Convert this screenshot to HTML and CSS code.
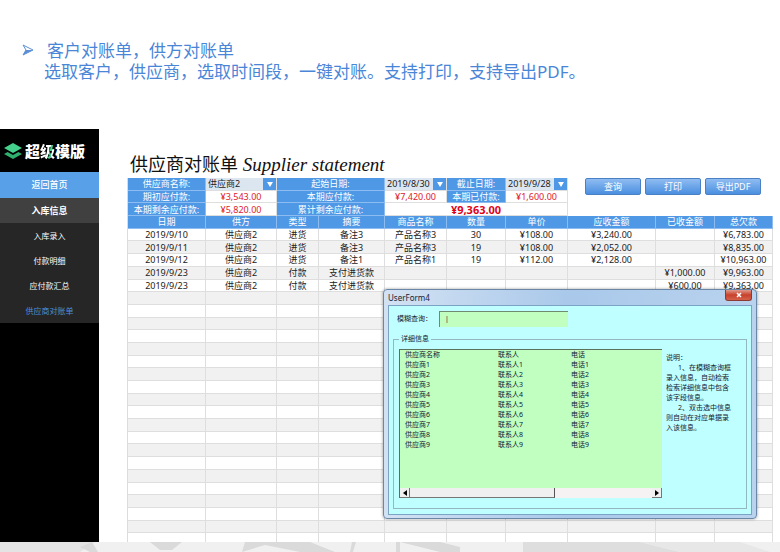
FILE: index.html
```html
<!DOCTYPE html>
<html lang="zh-CN">
  <head>
    <meta charset="UTF-8" />
    <meta name="viewport" content="width=device-width, initial-scale=1.0" />
    <title>供应商对账单</title>
    <link rel="stylesheet" href="styles.css">
  </head>
  <body>
    <header class="intro">
      <svg class="intro-arrow" viewBox="0 0 12 12" aria-hidden="true">
        <path d="M1 1 L11 6 L1 11 L4 6 Z" fill="#fff" stroke="#5b8fd8" stroke-width="1" />
        <path d="M1 11 L11 6 L4 6 Z" fill="#5b8fd8" />
      </svg>
      <div class="intro-text">
        <p class="first">客户对账单，供方对账单</p>
        <p>选取客户，供应商，选取时间段，一键对账。支持打印，支持导出PDF。</p>
      </div>
    </header>

    <div class="app">
      <!-- Menu -->
      <nav class="sidebar">
        <div class="logo">
          <svg viewBox="0 0 18 18" aria-hidden="true">
            <path d="M0 12 L9 7 L18 12 L9 17 Z" fill="#2fae6d" />
            <path d="M0 8 L9 3 L18 8 L9 13 Z" fill="#000" />
            <path d="M0 6 L9 1 L18 6 L9 11 Z" fill="#45d08b" />
          </svg>
          <span>超<b>级</b>模版</span>
        </div>
        <a class="home" href="#">返回首页</a>
        <a class="group" href="#">入库信息</a>
        <div class="submenu">
          <a href="#">入库录入</a>
          <a href="#">付款明细</a>
          <a href="#">应付款汇总</a>
          <a class="active" href="#">供应商对账单</a>
        </div>
      </nav>

      <!-- Statement -->
      <main class="sheet">
        <h1>供应商对账单 <em>Supplier statement</em></h1>
        <table class="statement">
          <colgroup>
            <col class="c-date"><col class="c-supplier"><col class="c-type"><col class="c-note"><col class="c-product">
            <col class="c-count"><col class="c-price"><col class="c-due"><col class="c-paid"><col class="c-total">
          </colgroup>
          <tbody class="summary">
            <tr>
              <th><label for="supplier">供应商名称:</label></th>
              <td class="pick"><select id="supplier"><option>供应商2</option></select></td>
              <th colspan="2"><label for="from">起始日期:</label></th>
              <td class="pick"><select id="from"><option>2019/8/30</option></select></td>
              <th><label for="to">截止日期:</label></th>
              <td class="pick"><select id="to"><option>2019/9/28</option></select></td>
              <td class="tools" colspan="3" rowspan="3">
                <div class="buttons">
                  <button type="button">查询</button>
                  <button type="button">打印</button>
                  <button type="button">导出PDF</button>
                </div>
              </td>
            </tr>
            <tr>
              <th>期初应付款:</th>
              <td>¥3,543.00</td>
              <th colspan="2">本期应付款:</th>
              <td>¥7,420.00</td>
              <th>本期已付款:</th>
              <td>¥1,600.00</td>
            </tr>
            <tr>
              <th>本期剩余应付款:</th>
              <td>¥5,820.00</td>
              <th colspan="2">累计剩余应付款:</th>
              <td class="sum" colspan="3">¥9,363.00</td>
            </tr>
          </tbody>
          <tbody class="head">
            <tr>
              <th>日期</th><th>供方</th><th>类型</th><th>摘要</th><th>商品名称</th>
              <th>数量</th><th>单价</th><th>应收金额</th><th>已收金额</th><th>总欠款</th>
            </tr>
          </tbody>
          <tbody class="rows" id="rows"></tbody>
        </table>
      </main>
    </div>

    <footer class="skyline">
      <svg viewBox="0 0 780 10" preserveAspectRatio="none" aria-hidden="true">
        <rect width="780" height="10" fill="#f0f0f0" />
        <path d="M0 0 H95 L80 10 H0 Z" fill="#e4e4e4" />
        <path d="M80 5 L92 0 L98 10 H90 Z M150 0 H182 L172 8 H160 Z M245 0 H310 L335 10 H300 L265 3 L242 10 Z M352 0 H356 L353 10 H350 Z" fill="#dadada" />
        <path d="M396 0 H400 V10 H396 Z M400 0 H440 L460 5 V10 H440 Z" fill="#dadada" />
        <path d="M523 0 H640 L680 10 H523 Z" fill="#dedede" />
        <path d="M640 0 H740 L770 10 H680 Z" fill="#e7e7e7" />
      </svg>
    </footer>

    <!-- Supplier search window -->
    <section class="window">
      <div class="titlebar">
        <span>UserForm4</span>
        <button type="button" class="close" aria-label="关闭">
          <svg viewBox="0 0 8 6" aria-hidden="true"><path d="M2 1 L6 5 M6 1 L2 5" stroke="#fff" stroke-width="1.5" /></svg>
        </button>
      </div>
      <div class="client">
        <div class="search">
          <label for="query">模糊查询：</label>
          <input type="text" id="query" value="|" />
        </div>
        <fieldset>
          <legend>详细信息</legend>
          <div class="listbox">
            <table>
              <thead>
                <tr><th>供应商名称</th><th>联系人</th><th>电话</th></tr>
              </thead>
              <tbody id="suppliers"></tbody>
            </table>
            <div class="scrollbar">
              <button type="button" aria-label="向左"><svg viewBox="0 0 4 6"><path d="M4 0 V6 L0 3 Z" /></svg></button>
              <div class="thumb"></div>
              <button type="button" class="right" aria-label="向右"><svg viewBox="0 0 4 6"><path d="M0 0 V6 L4 3 Z" /></svg></button>
            </div>
          </div>
          <div class="help">
            <p>说明：</p>
            <p class="item">1、在模糊查询框<br>录入信息，自动检索<br>检索详细信息中包含<br>该字段信息。</p>
            <p class="item">2、双击选中信息<br>则自动在对应单据录<br>入该信息。</p>
          </div>
        </fieldset>
      </div>
    </section>

    <script src="script.js"></script>
  </body>
</html>
```
FILE: styles.css
```css
* {
  box-sizing: border-box;
  margin: 0;
  padding: 0;
}

body {
  height: 100vh;
  display: flex;
  flex-direction: column;
  position: relative;
  overflow: hidden;
  background: #fff;
  color: #222;
  font-family: "Noto Sans", "Noto Sans CJK SC", sans-serif;
  font-size: 9px;
}

a {
  color: inherit;
  text-decoration: none;
}

button,
input,
select {
  font: inherit;
  color: inherit;
  border: none;
}

/* Intro */
.intro {
  flex: none;
  height: 129px;
  display: flex;
  padding: 40px 22px 0;
  color: #4a86d8;
  font-size: 17px;
  line-height: 21px;
}

.intro-arrow {
  width: 12px;
  height: 12px;
  margin-top: 4px;
}

.intro-text {
  margin-left: 10px;
  white-space: nowrap;
}

.intro-text .first {
  padding-left: 3px;
}

.app {
  flex: 1;
  min-height: 0;
  display: flex;
}

/* Menu */
.sidebar {
  flex: none;
  width: 99px;
  background: #000;
  color: #fff;
  text-align: center;
}

.logo {
  height: 43px;
  display: flex;
  align-items: center;
  gap: 3px;
  padding-left: 4px;
  font-size: 15px;
  font-weight: 900;
  white-space: nowrap;
}

.logo svg {
  width: 18px;
  height: 18px;
}

.logo b {
  background: linear-gradient(105deg, #fff 58%, #45d08b 60%, #45d08b 72%, #fff 74%);
  background-clip: text;
  -webkit-background-clip: text;
  color: transparent;
}

.sidebar a {
  display: block;
  line-height: 25px;
}

.sidebar .home {
  background: #58a0e8;
  font-weight: 500;
  line-height: 26px;
}

.sidebar .group {
  background: #404040;
  font-weight: bold;
}

.submenu {
  background: #262626;
  font-size: 8px;
}

.submenu .active {
  color: #4a8fdc;
}

/* Statement */
.sheet {
  flex: 1;
  min-width: 0;
  overflow: hidden;
  padding: 22px 8px 0 28px;
}

h1 {
  height: 27px;
  padding-left: 3px;
  font-size: 18px;
  font-weight: normal;
  line-height: 26px;
  color: #111;
  white-space: nowrap;
}

h1 em {
  font-family: "Liberation Serif", serif;
  font-size: 19px;
}

.statement {
  width: 100%;
  height: 368px;
  table-layout: fixed;
  border-spacing: 0;
  border-left: 1px solid #dcdcdc;
  line-height: 11px;
  text-align: center;
  white-space: nowrap;
}

.c-date { width: 78px; }
.c-supplier { width: 71px; }
.c-type { width: 42px; }
.c-note { width: 66px; }
.c-product { width: 62px; }
.c-count { width: 59px; }
.c-price { width: 62px; }
.c-due { width: 88px; }
.c-paid { width: 59px; }
.c-total { width: 58px; }

.statement tr {
  height: 12px;
}

.statement th,
.statement td {
  border-right: 1px solid #dedede;
  border-bottom: 1px solid #dedede;
}

.statement th {
  background: #4f98e6;
  border-color: #8dbcf0;
  color: #fff;
  font-weight: normal;
}

.summary td {
  color: #e0202c;
}

.summary .sum {
  color: #e00018;
  font-size: 11px;
  font-weight: bold;
}

.statement .pick {
  position: relative;
  background: #dce6f1;
  color: #222;
  text-align: left;
}

.pick select {
  display: block;
  width: 100%;
  height: 11px;
  padding-left: 2px;
  appearance: none;
  background: transparent;
  line-height: 11px;
}

.pick::before {
  content: "";
  position: absolute;
  top: 0;
  right: 0;
  bottom: 0;
  width: 13px;
  background: #4f98e6;
}

.pick::after {
  content: "";
  position: absolute;
  top: 4px;
  right: 3px;
  border: 3px solid transparent;
  border-top: 5px solid #fff;
  border-bottom: none;
}

.statement .tools {
  border: none;
  vertical-align: top;
}

.buttons {
  display: flex;
  gap: 4px;
  padding: 0 12px 0 17px;
}

.buttons button {
  flex: 1;
  height: 17px;
  border: 1px solid #4a80c4;
  border-radius: 2px;
  background: linear-gradient(#8fbcf2, #4b8fe0);
  color: #fff;
  line-height: 15px;
}

.rows tr:nth-child(even) {
  background: #f1f1f1;
}

.skyline {
  flex: none;
  height: 10px;
}

.skyline svg {
  display: block;
  width: 100%;
  height: 100%;
}

/* Supplier search window */
.window {
  position: absolute;
  top: 289px;
  right: 23px;
  width: 374px;
  padding: 0 4px 3px;
  border: 1px solid #6b87a8;
  border-radius: 4px;
  background: linear-gradient(90deg, #d3e2f3, #a9c8ea 50%, #b9d3ee);
  box-shadow: 0 0 3px rgba(0, 0, 0, 0.4);
  color: #123;
  font-size: 7px;
  line-height: 10px;
}

.titlebar {
  height: 15px;
  display: flex;
  justify-content: space-between;
  font-size: 8px;
  line-height: 15px;
}

.close {
  width: 27px;
  height: 11px;
  border: 1px solid #8c3a35;
  border-top: none;
  border-radius: 0 0 3px 3px;
  background: linear-gradient(#e09a8c, #c8402c 50%, #d4624a);
}

.close svg {
  display: block;
  width: 8px;
  height: 6px;
  margin: 0 auto;
}

.client {
  padding: 5px 4px;
  border: 1px solid #7ba4c4;
  background: #c0ffff;
}

.search {
  display: flex;
  align-items: center;
  padding-left: 4px;
}

.search label {
  width: 42px;
}

.search input {
  width: 129px;
  height: 16px;
  padding: 0 5px 3px;
  border-top: 1px solid #6f8a6f;
  border-left: 1px solid #6f8a6f;
  background: #c0ffc0;
}

fieldset {
  display: flex;
  align-items: flex-start;
  margin-top: 7px;
  padding: 5px 5px 10px;
  border: 1px solid #94b8c0;
}

legend {
  padding: 0 2px;
}

.listbox {
  width: 263px;
  height: 149px;
  display: flex;
  flex-direction: column;
  justify-content: space-between;
  border-top: 1px solid #5a705a;
  border-left: 1px solid #5a705a;
  background: #c0ffc0;
}

.listbox table {
  width: 100%;
  table-layout: fixed;
  border-spacing: 0;
  text-align: left;
}

.listbox th,
.listbox td {
  padding-left: 5px;
  font-weight: normal;
}

.listbox th:nth-child(1) { width: 93px; }
.listbox th:nth-child(2) { width: 73px; }

.scrollbar {
  height: 10px;
  display: flex;
  background: #f6f2f4;
}

.scrollbar button {
  width: 10px;
  display: flex;
  align-items: center;
  justify-content: center;
  background: #f0f0f0;
  border-right: 1px solid #777;
  border-bottom: 1px solid #777;
}

.scrollbar .right {
  margin-left: auto;
}

.scrollbar svg {
  width: 4px;
  height: 6px;
}

.thumb {
  width: 145px;
  background: #f0f0f0;
  border-right: 1px solid #555;
  border-bottom: 1px solid #777;
}

.help {
  padding: 4px 0 0 4px;
  white-space: nowrap;
}

.help .item {
  text-indent: 12px;
}
```
FILE: script.js
```js
const records = [
  ["2019/9/10", "供应商2", "进货", "备注3", "产品名称3", "30", "¥108.00", "¥3,240.00", "", "¥6,783.00"],
  ["2019/9/11", "供应商2", "进货", "备注3", "产品名称3", "19", "¥108.00", "¥2,052.00", "", "¥8,835.00"],
  ["2019/9/12", "供应商2", "进货", "备注1", "产品名称1", "19", "¥112.00", "¥2,128.00", "", "¥10,963.00"],
  ["2019/9/23", "供应商2", "付款", "支付进货款", "", "", "", "", "¥1,000.00", "¥9,963.00"],
  ["2019/9/23", "供应商2", "付款", "支付进货款", "", "", "", "", "¥600.00", "¥9,363.00"],
];
const totalRows = 25;

const rows = document.getElementById("rows");
for (let i = 0; i < totalRows; i++) {
  const tr = document.createElement("tr");
  const data = records[i] || Array(10).fill("");
  tr.innerHTML = data.map((v) => `<td>${v}</td>`).join("");
  rows.appendChild(tr);
}

const suppliers = document.getElementById("suppliers");
for (let n = 1; n <= 9; n++) {
  const tr = document.createElement("tr");
  tr.innerHTML = `<td>供应商${n}</td><td>联系人${n}</td><td>电话${n}</td>`;
  suppliers.appendChild(tr);
}
```
